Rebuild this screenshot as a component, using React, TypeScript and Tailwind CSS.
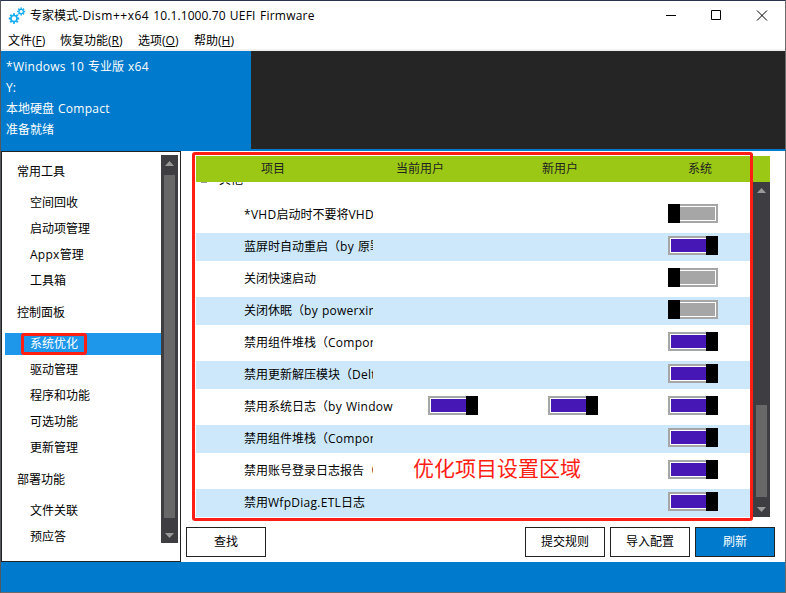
import React from 'react';

const menus = [
  { label: '文件', key: 'F', cls: 'w-[52px]' },
  { label: '恢复功能', key: 'R', cls: 'w-[78px]' },
  { label: '选项', key: 'O', cls: 'w-[56px]' },
  { label: '帮助', key: 'H', cls: 'w-[52px]' },
];

const groups = [
  { title: '常用工具', items: ['空间回收', '启动项管理', 'Appx管理', '工具箱'] },
  { title: '控制面板', items: ['系统优化', '驱动管理', '程序和功能', '可选功能', '更新管理'] },
  { title: '部署功能', items: ['文件关联', '预应答'] },
];

type Row = { text: string; on: boolean; users?: boolean };

const rows: Row[] = [
  { text: '*VHD启动时不要将VHD', on: false },
  { text: '蓝屏时自动重启（by 原罪', on: true },
  { text: '关闭快速启动', on: false },
  { text: '关闭休眠（by powerxin', on: false },
  { text: '禁用组件堆栈（Compon', on: true },
  { text: '禁用更新解压模块（Delt', on: true },
  { text: '禁用系统日志（by Window', on: true, users: true },
  { text: '禁用组件堆栈（Compon', on: true },
  { text: '禁用账号登录日志报告（', on: true },
  { text: '禁用WfpDiag.ETL日志', on: true },
];

function gearPath(cx: number, cy: number, inner: number, outer: number, turn: number) {
  const points: string[] = [];
  const step = Math.PI / 4;
  for (let i = 0; i < 8; i++) {
    const a = i * step + turn;
    const corners: [number, number][] = [
      [inner, -0.24],
      [outer, -0.2],
      [outer, 0.2],
      [inner, 0.24],
    ];
    for (const [r, d] of corners) {
      points.push(`${(cx + r * Math.cos(a + d)).toFixed(2)} ${(cy + r * Math.sin(a + d)).toFixed(2)}`);
    }
  }
  return `M${points.join('L')}Z`;
}

function circlePath(cx: number, cy: number, r: number) {
  return `M${cx - r} ${cy}a${r} ${r} 0 1 0 ${2 * r} 0a${r} ${r} 0 1 0 ${-2 * r} 0Z`;
}

function Gears() {
  return (
    <svg width="18" height="18" viewBox="0 0 18 18" fill="#16adf0" fillRule="evenodd">
      <path d={gearPath(6, 11.5, 3.9, 5.4, 0) + circlePath(6, 11.5, 2.2)} />
      <path d={gearPath(13.2, 4.5, 2.9, 4.1, 0) + circlePath(13.2, 4.5, 1.6)} />
    </svg>
  );
}

/* Latin runs are set slightly wider than the CJK text around them. */
function Mixed({ text }: { text: string }) {
  return (
    <>
      {text.split(/([\x20-\x7e]+)/).map((part, i) =>
        i % 2 ? (
          <span key={i} className="tracking-[0.27px] whitespace-pre [word-spacing:0.6px]">
            {part}
          </span>
        ) : (
          part
        ),
      )}
    </>
  );
}

function Toggle({ on }: { on: boolean }) {
  return (
    <div className={'flex h-[19px] w-[50px] bg-[#a6a6a6] ' + (on ? 'pl-[2px]' : 'pr-[2px]')}>
      {!on && <div className="w-3 bg-black" />}
      <div
        className={
          'my-[2px] flex-1 border-y border-white ' + (on ? 'border-l bg-[#4617b4]' : 'border-r bg-[#a6a6a6]')
        }
      />
      {on && <div className="w-3 bg-black" />}
    </div>
  );
}

function Arrow({ down }: { down?: boolean }) {
  return (
    <svg className="shrink-0" width="9" height="5" viewBox="0 0 9 5" fill="#999999">
      <path d={down ? 'M0 0H9L4.5 5Z' : 'M0 5H9L4.5 0Z'} />
    </svg>
  );
}

function Button({ children, primary }: { children: string; primary?: boolean }) {
  return (
    <div
      className={
        'flex h-[30px] w-20 items-center justify-center border border-[#222] ' +
        (primary ? 'bg-[#007acc] text-white' : 'bg-white')
      }
    >
      {children}
    </div>
  );
}

export default function App() {
  return (
    <div className="h-[593px] w-[786px] overflow-hidden border border-t-[#2a3350] border-r-[#6a6a6a] border-b-[#6a6a6a] border-l-[#55585c] bg-white font-['Open_Sans','Noto_Sans_CJK_SC',sans-serif] text-[12px] leading-[16px] whitespace-nowrap text-black">
      <div className="flex h-[29px] items-center pl-[7px]">
        <Gears />
        <span className="ml-[4px] flex-1 [word-spacing:1px]">
          专家模式<span className="tracking-[0.5px]">-Dism++x64</span>{' '}
          <span className="tracking-[0.1px]">10.1.1000.70</span>{' '}
          <span className="tracking-[0.22px]">UEFI Firmware</span>
        </span>
        <svg className="mr-[17px]" width="102" height="11" viewBox="0 0 102 11" fill="none" stroke="#000">
          <path d="M0 5.5H10M45.5 0.5H54.5V9.5H45.5ZM91 0.5L101 10.5M101 0.5L91 10.5" />
        </svg>
      </div>
      <div className="flex h-[21px] items-center border-b-2 border-[#f0f0f0] pt-[2px] pl-[7px]">
        {menus.map((m) => (
          <span key={m.label} className={m.cls}>
            {m.label}(<span className="underline">{m.key}</span>)
          </span>
        ))}
      </div>
      <div className="flex h-[100px] border-b-2 border-[#007acc] bg-[#252525]">
        <div className="w-[250px] bg-[#007acc] pt-[5px] pl-[5px] leading-[21px] text-white">
          <div><Mixed text="*Windows 10 专业版 x64" /></div>
          <div>Y:</div>
          <div><Mixed text="本地硬盘 Compact" /></div>
          <div>准备就绪</div>
        </div>
      </div>
      <div className="flex h-[411px]">
        <div className="flex w-[180px] border border-[#222]">
          <div className="flex-1 pl-[3px]">
            {groups.map((g) => (
              <div key={g.title}>
                <div className="flex h-[37px] items-center pt-[3px] pl-3">{g.title}</div>
                {g.items.map((item) => (
                  <div key={item} className="flex h-[26px] items-center pt-[2px]">
                    {item === '系统优化' ? (
                      <div className="flex h-[22px] flex-1 items-center bg-[#1e97ea] pl-4 text-white">
                        <div className="flex h-[22px] w-[66px] items-center rounded-[3px] border-3 border-[#ff1e14] pl-[6px]">
                          {item}
                        </div>
                      </div>
                    ) : (
                      <span className="pl-[25px]"><Mixed text={item} /></span>
                    )}
                  </div>
                ))}
              </div>
            ))}
          </div>
          <div className="mt-[3px] mr-[2px] flex h-[388px] w-[17px] flex-col items-center bg-[#3e3e42] pt-[6px]">
            <Arrow />
            <div className="mt-[9px] mb-[15px] h-[343px] w-[11px] bg-[#686868]" />
            <Arrow down />
          </div>
        </div>
        <div className="flex flex-1 flex-col pt-[5px]">
          <div className="relative ml-[15px] flex h-[26px] w-[574px] items-center bg-[#9ac814] text-[#222]">
            <span className="w-[154px] text-center">项目</span>
            <span className="w-[140px] text-center">当前用户</span>
            <span className="w-[140px] text-center">新用户</span>
            <span className="w-[140px] text-center">系统</span>
            <div className="absolute -top-1 -left-1 z-10 h-[369px] w-[561px] rounded-[3px] border-3 border-[#ff1e14]" />
          </div>
          <div className="ml-[15px] flex h-[335px] w-[574px]">
            <div className="w-[554px] overflow-hidden">
              <div className="flex h-[17px] items-start overflow-hidden">
                <div className="ml-[5px] h-px w-[6px] bg-[#999]" />
                <div className="-mt-[10px] ml-[12px]">其他</div>
              </div>
              {rows.map((r, i) => (
                <div key={i} className="py-[2px]">
                  <div className={'flex h-[28px] items-center pl-12 ' + (i % 2 ? 'bg-[#cce8fa]' : 'bg-white')}>
                    <div className={'overflow-hidden ' + (r.users ? 'w-[160px]' : 'w-[129px]')}>
                      <Mixed text={r.text} />
                    </div>
                    <div className="flex flex-1 justify-end gap-[70px] pr-8 pb-[3px]">
                      {r.users && (
                        <>
                          <Toggle on />
                          <Toggle on />
                        </>
                      )}
                      <Toggle on={r.on} />
                    </div>
                  </div>
                </div>
              ))}
            </div>
            <div className="ml-[3px] flex w-[17px] flex-col items-center bg-[#3e3e42] pt-[6px]">
              <Arrow />
              <div className="mt-[212px] mb-[10px] h-[92px] w-[11px] bg-[#686868]" />
              <Arrow down />
            </div>
          </div>
          <div className="mt-[10px] flex gap-[5px] pr-[10px] pl-[5px]">
            <Button>查找</Button>
            <div className="flex-1" />
            <Button>提交规则</Button>
            <Button>导入配置</Button>
            <Button primary>刷新</Button>
          </div>
        </div>
      </div>
      <div className="h-[30px] bg-[#007acc]" />
      <div className="absolute top-[453px] left-[413px] text-[21px] leading-[30px] text-[#ff1e14]">
        优化项目设置区域
      </div>
    </div>
  );
}
